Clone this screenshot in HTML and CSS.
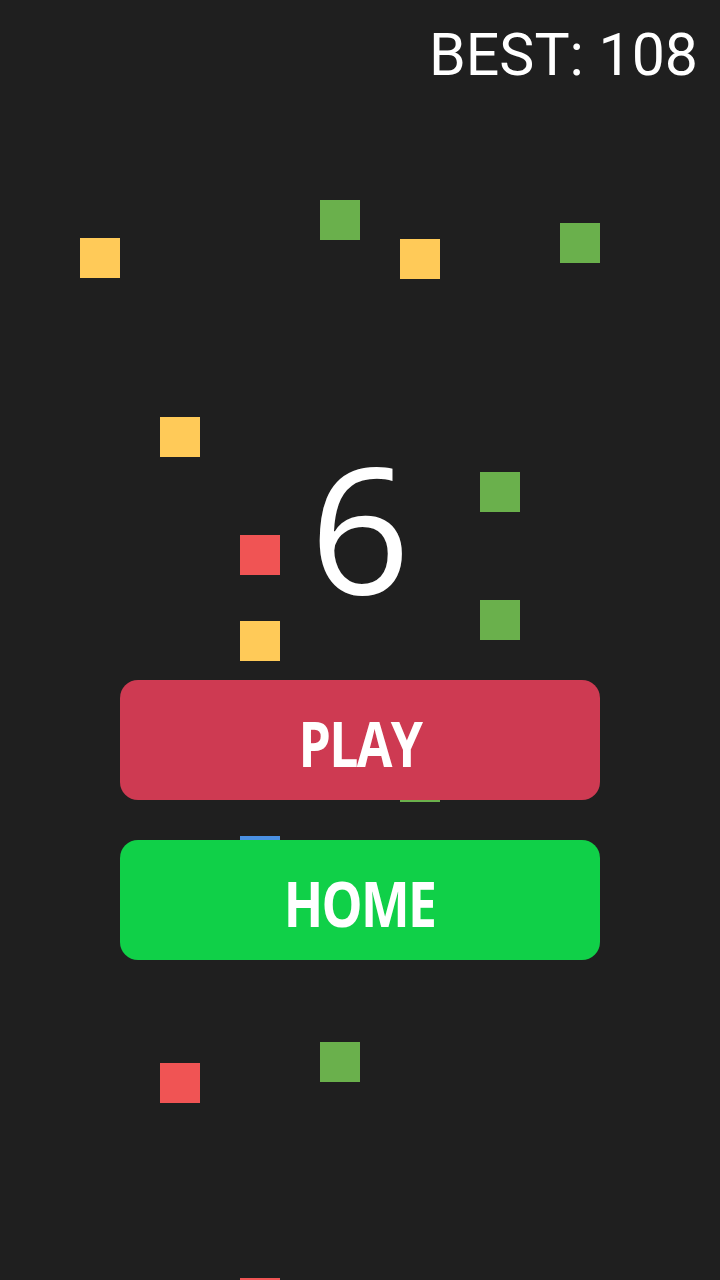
FILE: index.html
```html
<!DOCTYPE html>
<html>
<head>
<meta charset="utf-8">
<link rel="stylesheet" href="styles.css">
</head>
<body>
<div class="screen">
  <div class="field">
    <span class="sq yellow" style="left:80px;top:238px"></span>
    <span class="sq green" style="left:320px;top:200px"></span>
    <span class="sq yellow" style="left:400px;top:239px"></span>
    <span class="sq green" style="left:560px;top:223px"></span>
    <span class="sq yellow" style="left:160px;top:417px"></span>
    <span class="sq green" style="left:480px;top:472px"></span>
    <span class="sq red" style="left:240px;top:535px"></span>
    <span class="sq yellow" style="left:240px;top:621px"></span>
    <span class="sq green" style="left:480px;top:600px"></span>
    <span class="sq green" style="left:400px;top:762px"></span>
    <span class="sq blue" style="left:240px;top:836px"></span>
    <span class="sq green" style="left:320px;top:1042px"></span>
    <span class="sq red" style="left:160px;top:1063px"></span>
    <span class="sq red" style="left:240px;top:1278px"></span>
  </div>
  <div class="content">
    <div class="top"><div class="best">BEST: 108</div></div>
    <div class="score">6</div>
    <div class="buttons">
      <div class="btn btn-play"><span class="label">PLAY</span></div>
      <div class="btn btn-home"><span class="label">HOME</span></div>
    </div>
  </div>
</div>
</body>
</html>
```
FILE: styles.css
```css
html, body {
  margin: 0;
  padding: 0;
  background: #1f1f1f;
}
.screen {
  position: relative;
  width: 720px;
  height: 1280px;
  overflow: hidden;
  background: #1f1f1f;
}
.field {
  position: absolute;
  inset: 0;
}
.sq {
  position: absolute;
  width: 40px;
  height: 40px;
}
.yellow { background: #ffca58; }
.green { background: #6ab04c; }
.red { background: #f05454; }
.blue { background: #4a90e2; }
.content {
  position: relative;
  display: flex;
  flex-direction: column;
  align-items: center;
}
.top {
  align-self: stretch;
  height: 100px;
  display: flex;
  justify-content: flex-end;
  padding-right: 22px;
}
.best {
  font-family: Roboto, sans-serif;
  font-size: 59px;
  line-height: 59px;
  padding-top: 25px;
  color: #ffffff;
}
.score {
  margin-top: 338px;
  font-family: "Open Sans", sans-serif;
  font-size: 176px;
  line-height: 176px;
  color: #ffffff;
}
.buttons {
  margin-top: 66px;
  display: flex;
  flex-direction: column;
  gap: 40px;
}
.btn {
  width: 480px;
  height: 120px;
  border-radius: 18px;
  display: flex;
  align-items: center;
  justify-content: center;
}
.btn-play { background: #ce3a52; }
.btn-home { background: #10d048; }
.label {
  font-family: "Open Sans", sans-serif;
  font-weight: 700;
  font-size: 63px;
  color: #ffffff;
  letter-spacing: -2px;
  padding-top: 5px;
  display: inline-block;
  transform: scaleX(0.82);
}
```
